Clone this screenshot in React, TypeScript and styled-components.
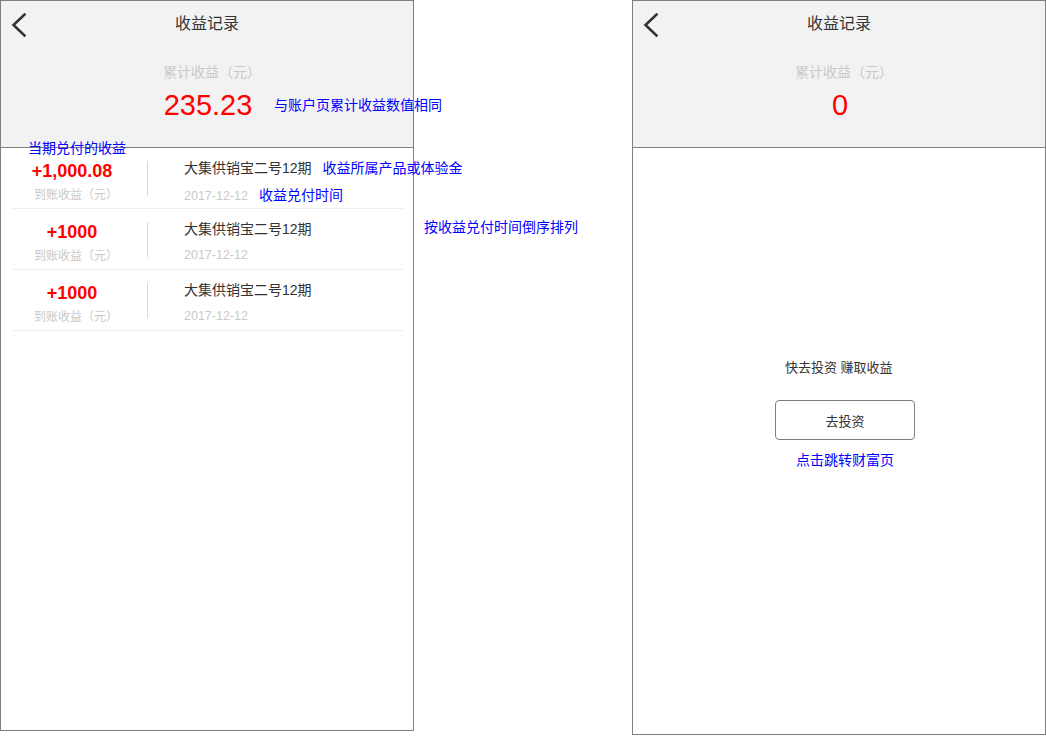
import React from "react";
import styled, {createGlobalStyle} from "styled-components";

const GlobalStyle = createGlobalStyle`
  html, body {
    margin: 0;
    padding: 0;
    background: #ffffff;
  }
  body {
    font-family: "Liberation Sans", "Noto Sans CJK SC", sans-serif;
  }
`

const FONT = `"Liberation Sans", "Noto Sans CJK SC", sans-serif`
const NOTE_BLUE = "#0000ff"

/**
 * 页面
 */
const Page = styled.div`
  display: flex;
  align-items: flex-start;
  width: 1046px;
  height: 736px;
  overflow: hidden;
  font-family: ${FONT};
`

const Frame = styled.div<{$height: number}>`
  position: relative;
  box-sizing: border-box;
  width: 414px;
  height: ${props => props.$height}px;
  border: 1px solid #7f7f7f;
  background: #ffffff;
  flex-shrink: 0;
`

const Gutter = styled.div`
  width: 218px;
  flex-shrink: 0;
  box-sizing: border-box;
  padding: 217px 0 0 10px;
`

/**
 * 头部
 */
const Header = styled.div`
  height: 146px;
  background: #f2f2f2;
  border-bottom: 1px solid #7f7f7f;
  text-align: center;
`

const NavBar = styled.div`
  display: grid;
  grid-template-columns: 40px 1fr 40px;
  align-items: center;
  height: 46px;
`

const BackIcon = styled.svg`
  display: block;
  margin-left: 9px;
  margin-top: 1px;
`

const Title = styled.div`
  font-size: 16px;
  line-height: 46px;
  color: #333333;
`

const SumLabel = styled.div`
  margin-top: 15px;
  padding-left: 10px;
  font-size: 14px;
  line-height: 20px;
  color: #c9c9c9;
`

const SumValue = styled.div`
  margin-top: 6px;
  padding-left: 2px;
  font-size: 29px;
  line-height: 34px;
  color: #ff0000;
`

/**
 * 注释
 */
const Note = styled.span`
  font-size: 14px;
  line-height: 20px;
  color: ${NOTE_BLUE};
  white-space: nowrap;
`

const FloatNote = styled(Note)<{$left: number; $top: number}>`
  position: absolute;
  left: ${props => props.$left}px;
  top: ${props => props.$top}px;
`

const InlineNote = styled(Note)`
  margin-left: 11px;
`

/**
 * 列表
 */
const List = styled.div`
  padding: 0 10px 0 12px;
`

const Row = styled.div`
  display: flex;
  align-items: flex-start;
  height: 60px;
  border-bottom: 1px solid #eeeeee;
`

const AmountCol = styled.div`
  flex: none;
  width: 118px;
  padding-top: 12px;
  text-align: center;
`

const Amount = styled.div`
  font-size: 18px;
  line-height: 22px;
  font-weight: bold;
  color: #ff0000;
`

const AmountLabel = styled.div`
  margin-top: 4px;
  padding-left: 8px;
  font-size: 12px;
  line-height: 18px;
  color: #c9c9c9;
`

const VLine = styled.div`
  flex: none;
  align-self: center;
  width: 1px;
  height: 35px;
  margin-left: 16px;
  background: #d9d9d9;
`

const InfoCol = styled.div`
  flex: none;
  padding: 10px 0 0 36px;
`

const ProductName = styled.div`
  display: flex;
  align-items: baseline;
  font-size: 14px;
  line-height: 20px;
  color: #333333;
  white-space: nowrap;
`

const DateText = styled.div`
  display: flex;
  align-items: baseline;
  margin-top: 7px;
  font-size: 12.5px;
  line-height: 18px;
  color: #c9c9c9;
  white-space: nowrap;
`

/**
 * 空状态
 */
const Empty = styled.div`
  display: flex;
  flex-direction: column;
  align-items: flex-start;
  padding-top: 210px;
`

const EmptyText = styled.div`
  margin-left: 152px;
  font-size: 13px;
  line-height: 20px;
  color: #333333;
`

const InvestButton = styled.button`
  box-sizing: border-box;
  width: 140px;
  height: 40px;
  margin: 22px 0 0 142px;
  border: 1px solid #7f7f7f;
  border-radius: 4px;
  background: #ffffff;
  font-family: ${FONT};
  font-size: 13px;
  color: #333333;
  padding: 0;
`

const EmptyNote = styled(Note)`
  margin: 10px 0 0 163px;
`

type Record = {
    amount: string
    name: string
    date: string
    nameNote?: string
    dateNote?: string
}

const records: Record[] = [
    {amount: "+1,000.08", name: "大集供销宝二号12期", date: "2017-12-12", nameNote: "收益所属产品或体验金", dateNote: "收益兑付时间"},
    {amount: "+1000", name: "大集供销宝二号12期", date: "2017-12-12"},
    {amount: "+1000", name: "大集供销宝二号12期", date: "2017-12-12"},
]

function Back(): React.JSX.Element {
    return (
        <BackIcon width="18" height="26" viewBox="0 0 18 26">
            <polyline points="14.5,2.5 3.5,13 14.5,23.5" fill="none" stroke="#333333" strokeWidth="2.6" strokeLinecap="square"/>
        </BackIcon>
    )
}

function RecordHeader({value}: {value: string}): React.JSX.Element {
    return (
        <Header>
            <NavBar>
                <Back/>
                <Title>收益记录</Title>
                <span/>
            </NavBar>
            <SumLabel>累计收益（元）</SumLabel>
            <SumValue>{value}</SumValue>
        </Header>
    )
}

export default function App(): React.JSX.Element {
    return (
        <Page>
            <GlobalStyle/>
            <Frame $height={731}>
                <RecordHeader value="235.23"/>
                <FloatNote $left={273} $top={94}>与账户页累计收益数值相同</FloatNote>
                <FloatNote $left={27} $top={137}>当期兑付的收益</FloatNote>
                <List>
                    {records.map((r, i) => (
                        <Row key={i}>
                            <AmountCol>
                                <Amount>{r.amount}</Amount>
                                <AmountLabel>到账收益（元）</AmountLabel>
                            </AmountCol>
                            <VLine/>
                            <InfoCol>
                                <ProductName>
                                    {r.name}
                                    {r.nameNote && <InlineNote>{r.nameNote}</InlineNote>}
                                </ProductName>
                                <DateText>
                                    {r.date}
                                    {r.dateNote && <InlineNote>{r.dateNote}</InlineNote>}
                                </DateText>
                            </InfoCol>
                        </Row>
                    ))}
                </List>
            </Frame>
            <Gutter>
                <Note>按收益兑付时间倒序排列</Note>
            </Gutter>
            <Frame $height={735}>
                <RecordHeader value="0"/>
                <Empty>
                    <EmptyText>快去投资 赚取收益</EmptyText>
                    <InvestButton>去投资</InvestButton>
                    <EmptyNote>点击跳转财富页</EmptyNote>
                </Empty>
            </Frame>
        </Page>
    )
}
